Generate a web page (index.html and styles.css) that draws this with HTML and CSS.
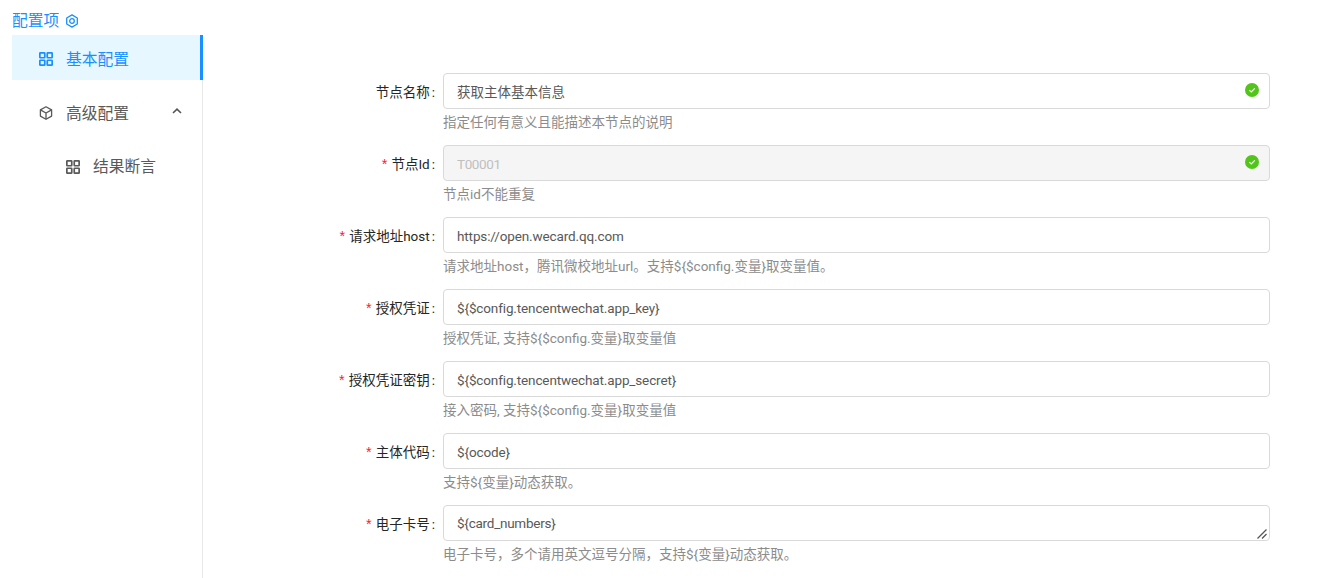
FILE: index.html
```html
<!DOCTYPE html>
<html lang="zh-CN">
<head>
<meta charset="utf-8">
<title>配置项</title>
<link rel="stylesheet" href="styles.css">
</head>
<body>
<div class="page">
  <aside class="side">
    <div class="side-title">配置项
      <svg class="title-icon" viewBox="0 0 14 14" width="14" height="14"><path d="M7 .9l5.300 3.050v6.100L7 13.100l-5.300-3.050v-6.100z" fill="none" stroke="#1890ff" stroke-width="1.300" stroke-linejoin="round"/><circle cx="7" cy="7" r="2.300" fill="none" stroke="#1890ff" stroke-width="1.300"/></svg>
    </div>
    <nav class="menu">
      <div class="menu-item active">
        <svg class="menu-icon" viewBox="0 0 14 14" width="14" height="14"><g fill="none" stroke="currentColor" stroke-width="1.700"><rect x=".85" y=".85" width="4.900" height="4.900" rx=".5"/><rect x="8.250" y=".85" width="4.900" height="4.900" rx=".5"/><rect x=".85" y="8.250" width="4.900" height="4.900" rx=".5"/><rect x="8.250" y="8.250" width="4.900" height="4.900" rx=".5"/></g></svg>
        <span>基本配置</span>
      </div>
      <div class="menu-item">
        <svg class="menu-icon" viewBox="0 0 14 14" width="14" height="14"><g fill="none" stroke="currentColor" stroke-width="1.300" stroke-linejoin="round"><path d="M7 .8l5.600 3.100v6.200L7 13.200l-5.600-3.100V3.900z"/><path d="M1.400 3.900L7 7l5.600-3.100M7 7v6.200"/></g></svg>
        <span>高级配置</span>
        <svg class="chevron" viewBox="0 0 10 6" width="10" height="6"><path d="M1 5l4-3.800L9 5" fill="none" stroke="#555" stroke-width="1.600"/></svg>
      </div>
      <div class="menu-item sub">
        <svg class="menu-icon" viewBox="0 0 14 14" width="14" height="14"><g fill="none" stroke="currentColor" stroke-width="1.700"><rect x=".85" y=".85" width="4.900" height="4.900" rx=".5"/><rect x="8.250" y=".85" width="4.900" height="4.900" rx=".5"/><rect x=".85" y="8.250" width="4.900" height="4.900" rx=".5"/><rect x="8.250" y="8.250" width="4.900" height="4.900" rx=".5"/></g></svg>
        <span>结果断言</span>
      </div>
    </nav>
  </aside>
  <form class="form">
    <div class="row">
      <label class="label">节点名称</label>
      <div class="control">
        <div class="field"><input class="input cjk" value="获取主体基本信息"><svg class="ok" viewBox="0 0 14 14" width="14" height="14"><circle cx="7" cy="7" r="7" fill="#52c41a"/><path d="M4.300 7.200l2 1.800L9.800 5.400" fill="none" stroke="#fff" stroke-width="1.100"/></svg></div>
        <div class="help">指定任何有意义且能描述本节点的说明</div>
      </div>
    </div>
    <div class="row">
      <label class="label"><i class="req">*</i>节点Id</label>
      <div class="control">
        <div class="field"><input class="input" value="T00001" disabled><svg class="ok" viewBox="0 0 14 14" width="14" height="14"><circle cx="7" cy="7" r="7" fill="#52c41a"/><path d="M4.300 7.200l2 1.800L9.800 5.400" fill="none" stroke="#fff" stroke-width="1.100"/></svg></div>
        <div class="help">节点id不能重复</div>
      </div>
    </div>
    <div class="row">
      <label class="label"><i class="req">*</i>请求地址host</label>
      <div class="control">
        <div class="field"><input class="input" value="https://open.wecard.qq.com"></div>
        <div class="help">请求地址host，腾讯微校地址url。支持${$config.变量}取变量值。</div>
      </div>
    </div>
    <div class="row">
      <label class="label"><i class="req">*</i>授权凭证</label>
      <div class="control">
        <div class="field"><input class="input" value="${$config.tencentwechat.app_key}"></div>
        <div class="help">授权凭证, 支持${$config.变量}取变量值</div>
      </div>
    </div>
    <div class="row">
      <label class="label"><i class="req">*</i>授权凭证密钥</label>
      <div class="control">
        <div class="field"><input class="input" value="${$config.tencentwechat.app_secret}"></div>
        <div class="help">接入密码, 支持${$config.变量}取变量值</div>
      </div>
    </div>
    <div class="row">
      <label class="label"><i class="req">*</i>主体代码</label>
      <div class="control">
        <div class="field"><input class="input" value="${ocode}"></div>
        <div class="help">支持${变量}动态获取。</div>
      </div>
    </div>
    <div class="row">
      <label class="label"><i class="req">*</i>电子卡号</label>
      <div class="control">
        <div class="field"><textarea class="input area">${card_numbers}</textarea><svg class="grip" viewBox="0 0 10 10" width="10" height="10"><path d="M.5 9.500L9.500.5M5 9.500L9.500 5" fill="none" stroke="#555" stroke-width="1.300"/></svg></div>
        <div class="help">电子卡号，多个请用英文逗号分隔，支持${变量}动态获取。</div>
      </div>
    </div>
  </form>
</div>
</body>
</html>
```

FILE: styles.css
```css
* { box-sizing: border-box; }
html, body { margin: 0; height: 100%; overflow: hidden; background: #fff; }
body { font-family: Roboto, "Noto Sans CJK SC", sans-serif; font-size: 13.5px; color: #595959; }
.page { display: flex; height: 578px; padding-left: 12px; }
.side { width: 191px; flex: none; display: flex; flex-direction: column; }
.side-title { height: 35px; padding-top: 11px; padding-bottom: 4px; line-height: 20px; font-size: 15.75px; color: #1890ff; display: flex; align-items: center; gap: 6px; }
.title-icon { flex: none; }
.menu { flex: 1; border-right: 1px solid #e8e8e8; }
.menu-item { height: 45px; margin-bottom: 9px; padding: 1px 0 0 27px; display: flex; align-items: center; gap: 13px; font-size: 15.75px; color: #595959; position: relative; }
.menu-item.active { color: #1890ff; background: #e6f7ff; border-right: 3px solid #1890ff; margin-right: -1px; }
.menu-item.sub { padding: 0 0 0 54px; }
.menu-icon { flex: none; margin-top: 2px; }
.chevron { position: absolute; right: 20px; top: 19px; }
.form { flex: 1; padding-top: 73px; padding-right: 58px; }
.row { display: flex; height: 72px; }
.label { width: 240px; flex: none; height: 36px; line-height: 38px; text-align: right; color: #262626; white-space: nowrap; }
.label::after { content: ":"; margin: 0 8px 0 2px; }
.req { font-style: normal; color: #f5222d; margin-right: 4px; font-family: "Liberation Sans", sans-serif; font-size: 14.5px; }
.control { flex: 1; }
.field { position: relative; height: 36px; }
.input { display: block; width: 100%; height: 36px; border: 1px solid #d9d9d9; border-radius: 4px; padding: 2px 13px 0; font: inherit; letter-spacing: -0.13px; color: #595959; background: #fff; outline: none; }
.input.cjk { letter-spacing: 0; padding-top: 0; }
.input:disabled { background: #f5f5f5; color: #bfbfbf; letter-spacing: -0.4px; }
.area { padding-top: 7px; line-height: 20px; letter-spacing: -0.25px; resize: none; }
.ok { position: absolute; right: 11px; top: 10px; }
.grip { position: absolute; right: 3px; bottom: 2px; }
.help { height: 28px; line-height: 27px; color: #8c8c8c; white-space: nowrap; }
```
